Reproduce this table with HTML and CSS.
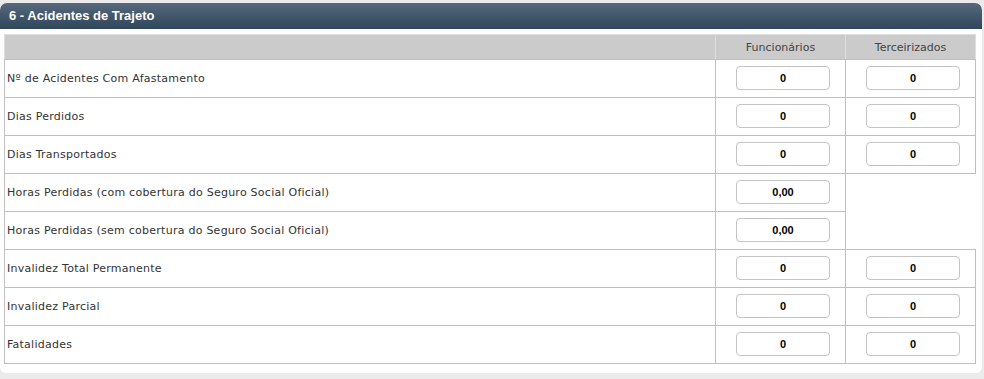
FILE: index.html
```html
<!DOCTYPE html>
<html>
<head>
	<meta charset="utf-8">
	<title>Acidentes de Trajeto</title>
	<meta name="viewport" content="width=device-width, initial-scale=1">
	<link rel="stylesheet" href="styles.css">
</head>
<body>

<div class="box">
	<div class="box-title">6 - Acidentes de Trajeto</div>
	<table class="grid">
		<thead>
			<tr>
				<th class="label-col"></th>
				<th class="num-col">Funcionários</th>
				<th class="num-col">Terceirizados</th>
			</tr>
		</thead>
		<tbody>
			<tr>
				<td>Nº de Acidentes Com Afastamento</td>
				<td class="num"><input name="acid_func" value="0" /></td>
				<td class="num"><input name="acid_terc" value="0" /></td>
			</tr>
			<tr>
				<td>Dias Perdidos</td>
				<td class="num"><input name="dias_func" value="0" /></td>
				<td class="num"><input name="dias_terc" value="0" /></td>
			</tr>
			<tr>
				<td>Dias Transportados</td>
				<td class="num"><input name="transp_func" value="0" /></td>
				<td class="num"><input name="transp_terc" value="0" /></td>
			</tr>
			<tr>
				<td>Horas Perdidas (com cobertura do Seguro Social Oficial)</td>
				<td class="num"><input name="horas_com" value="0,00" /></td>
				<td class="blank" rowspan="2"></td>
			</tr>
			<tr>
				<td>Horas Perdidas (sem cobertura do Seguro Social Oficial)</td>
				<td class="num"><input name="horas_sem" value="0,00" /></td>
			</tr>
			<tr>
				<td>Invalidez Total Permanente</td>
				<td class="num"><input name="itp_func" value="0" /></td>
				<td class="num"><input name="itp_terc" value="0" /></td>
			</tr>
			<tr>
				<td>Invalidez Parcial</td>
				<td class="num"><input name="ip_func" value="0" /></td>
				<td class="num"><input name="ip_terc" value="0" /></td>
			</tr>
			<tr>
				<td>Fatalidades</td>
				<td class="num"><input name="fat_func" value="0" /></td>
				<td class="num"><input name="fat_terc" value="0" /></td>
			</tr>
		</tbody>
	</table>
</div>

</body>
</html>
```

FILE: styles.css
```css
body {
	margin: 0;
	background-color: #ebebeb;
	font-family: "DejaVu Sans", Verdana, sans-serif;
	font-size: 11px;
	color: #333;
}

.box {
	width: 982px;
	box-sizing: border-box;
	margin: 3px 0 0;
	padding: 0 6px 9px 4px;
	background: #fff;
	border-radius: 7px 7px 6px 6px;
}

.box-title {
	margin: 0 -6px 0 -4px;
	height: 26px;
	line-height: 26px;
	padding: 0 9px;
	background: linear-gradient(#57697c, #30465a);
	border-radius: 7px 7px 0 0;
	color: #fff;
	font-family: "Liberation Sans", Arial, sans-serif;
	font-weight: bold;
	font-size: 13px;
}

table.grid {
	width: 100%;
	margin-top: 5px;
	border-collapse: collapse;
}

.grid th {
	height: 24px;
	padding: 0;
	background: #cbcbcb;
	border: 1px solid #dedede;
	border-bottom-color: #c0c0c0;
	font-weight: normal;
	color: #444;
	text-align: center;
}

.grid th.num-col {
	width: 129px;
}

.grid td {
	height: 37px;
	padding: 0 3px 0 2px;
	border: 1px solid #c0c0c0;
	letter-spacing: 0.25px;
}

.grid td.num {
	padding: 0 0 0 5px;
	text-align: center;
}

.grid td.blank {
	border: none;
}

/* number boxes use a narrower bold face than the labels */
.grid input {
	box-sizing: border-box;
	width: 94px;
	height: 24px;
	margin: 0 0 2px;
	padding: 0 4px;
	border: 1px solid #c4c4c4;
	border-radius: 4px;
	background: #fff;
	font-family: "Liberation Sans", Arial, sans-serif;
	font-size: 11px;
	font-weight: bold;
	color: #000;
	text-align: center;
	vertical-align: middle;
}
```
